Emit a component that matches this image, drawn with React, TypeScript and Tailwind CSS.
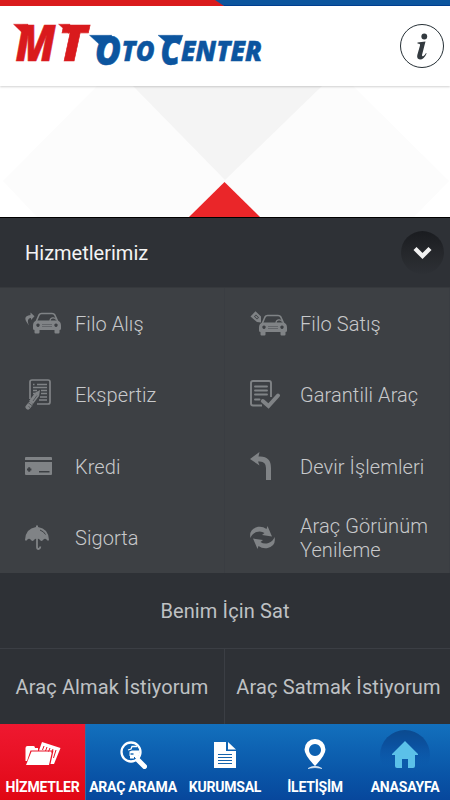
import React from "react";

interface Service {
  label: string;
  icon: React.ReactNode;
}

const Logo = () => (
  <svg width="270" height="56" viewBox="0 16 270 56" className="block overflow-visible">
    <g fill="#d91a1d" stroke="#d91a1d">
      <path d="M13.500 24.200H28V32H21.500Z" strokeWidth=".4" />
      <path d="M58.500 24.200H70L69 33.500Z" strokeWidth=".4" />
      <text y="60.500" fontFamily="Open Sans, sans-serif" fontWeight="800" fontStyle="italic" fontSize="50" strokeWidth="0.6">
        <tspan x="15.500" textLength="40" lengthAdjust="spacingAndGlyphs">M</tspan>
        <tspan x="58" textLength="29" lengthAdjust="spacingAndGlyphs">T</tspan>
      </text>
    </g>
    <g fill="#0c559f" stroke="#0c559f" fontFamily="Open Sans, sans-serif" fontWeight="800" fontStyle="italic">
      <path d="M89.500 35.300H112L99 44Z" strokeWidth=".4" />
      <path d="M158 35.300H183L180.500 41L168 44Z" strokeWidth=".4" />
      <text y="60.600" fontSize="28.500" strokeWidth="0.5">
        <tspan x="95" y="64.500" fontSize="40" textLength="26" lengthAdjust="spacingAndGlyphs">O</tspan>
        <tspan x="121.500" y="60.600" textLength="33" lengthAdjust="spacingAndGlyphs">TO</tspan>
        <tspan x="160.500" y="64.500" fontSize="40" textLength="20" lengthAdjust="spacingAndGlyphs">C</tspan>
        <tspan x="181" y="60.600" textLength="81" lengthAdjust="spacingAndGlyphs">ENTER</tspan>
      </text>
    </g>
  </svg>
);

// front view of a car, 29 x 21
const Car = () => (
  <>
    <path d="M3.500 9.500L6.500 2.500Q7.300 1 9 1H19.500Q21.500 1 22.300 2.500L25.500 9.500" fill="none" stroke="currentColor" strokeWidth="1.600" />
    <path d="M17.500 8.500a3.200 3.200 0 0 1 6-1.500" fill="none" stroke="currentColor" strokeWidth="1.200" />
    <path
      fillRule="evenodd"
      d="M4 8H25Q28.500 9 28.500 13V16Q28.500 17.500 27 17.500V20Q27 21 26 21H23Q22 21 22 20V17.500H7V20Q7 21 6 21H3Q2 21 2 20V17.500Q.5 17.500.5 16V13Q.5 9 4 8ZM5.500 11a1.700 1.700 0 1 0 .01 0ZM23.500 11a1.700 1.700 0 1 0 .01 0Z"
    />
    <path d="M9.500 12H19.500M9.500 14H19.500" stroke="#606366" strokeWidth=".9" />
  </>
);

const services: Service[] = [
  {
    label: "Filo Alış",
    icon: (
      <svg width="37" height="23" viewBox="0 0 37 23" fill="currentColor">
        <path d="M4 13.500Q-4 4 5.500 3V.5L9.500 4.300L6 8V6Q1 6.500 4 13.500Z" />
        <g transform="translate(7.500 .5)">
          <Car />
        </g>
      </svg>
    ),
  },
  {
    label: "Filo Satış",
    icon: (
      <svg width="38" height="25" viewBox="0 0 38 25" fill="currentColor">
        <path fillRule="evenodd" d="M.5 5.500L5.500 .3L11 5.500V11.500L7 11ZM4 5.500L7 8.500L9 6.500L6 3.500Z" />
        <path d="M5.500 5L7.500 7" stroke="currentColor" strokeWidth="1.300" />
        <g transform="translate(8.500 3.500)">
          <Car />
        </g>
      </svg>
    ),
  },
  {
    label: "Ekspertiz",
    icon: (
      <svg width="27" height="31" viewBox="0 0 27 31" fill="none" stroke="currentColor">
        <path d="M5 20V3Q5 1 7 1H23Q25 1 25 3V23Q25 25 23 25H12" strokeWidth="1.700" />
        <path d="M8 5.500H9.500M12 5.500H22M8 8.500H22M8 11.500H12M16 11.500H22M8 14.500H10M16 14.500H22M15 18H22M14 21H22" strokeWidth="1.300" />
        <path d="M3 28L5 25.500" strokeWidth="5" strokeLinecap="round" />
        <path d="M6 23.500L12 15.500" strokeWidth="5" />
        <path d="M9.500 14L15 11L14 17.500Z" fill="currentColor" stroke="none" />
        <path d="M3 23.500L7.500 27M8 22L12 16.500M3.500 27.500l1.500 1" stroke="#4d5053" strokeWidth=".9" />
      </svg>
    ),
  },
  {
    label: "Garantili Araç",
    icon: (
      <svg width="31" height="29" viewBox="0 0 31 29" fill="none" stroke="currentColor">
        <path d="M12 25.500H3Q1 25.500 1 23.500V3Q1 1 3 1H19Q21 1 21 3V17" strokeWidth="1.900" />
        <path d="M5 6.500H17M5 10.500H17M5 14.500H17M5 19.500H9.500" strokeWidth="1.900" strokeLinecap="round" />
        <path d="M12.800 21L18.500 26L28 15.500" strokeWidth="4" strokeLinecap="round" />
      </svg>
    ),
  },
  {
    label: "Kredi",
    icon: (
      <svg width="27" height="18" viewBox="0 0 27 18" fill="currentColor">
        <path fillRule="evenodd" d="M1 0H26Q27 0 27 1V3H0V1Q0 0 1 0ZM0 5H27V17Q27 18 26 18H1Q0 18 0 17ZM3.200 10.300V11.500H2V13.500H3.200V14.700H5.200V13.500H6.400V11.500H5.200V10.300ZM14 14V15.500H24.500V14Z" />
      </svg>
    ),
  },
  {
    label: "Devir İşlemleri",
    icon: (
      <svg width="22" height="28" viewBox="0 0 22 28" fill="currentColor">
        <path d="M0 7L9.500 0L8.500 4.500Q21 3.500 21 16V28H16V16Q16 8.500 8 9.500L9.500 13.500Z" />
      </svg>
    ),
  },
  {
    label: "Sigorta",
    icon: (
      <svg width="25" height="25" viewBox="0 0 25 25" fill="currentColor">
        <path d="M0 15Q.5 3.500 11 2V.7Q12 0 13 .7V2Q23.500 3.500 24 15Q23 16.500 22 15Q20 12.500 18 15Q16.500 17 15 15Q14 13.700 13 13.700H11Q10 13.700 9 15Q7.500 17 6 15Q4 12.500 2 15Q1 16.500 0 15Z" />
        <path d="M12 13V22Q12 24 13.500 24T15.300 21.500" fill="none" stroke="currentColor" strokeWidth="1.800" />
        <path d="M15 5Q19 6.500 20.500 9.500" fill="none" stroke="#3d4044" strokeWidth="1" />
      </svg>
    ),
  },
  {
    label: "Araç Görünüm Yenileme",
    icon: (
      <svg width="25" height="23" viewBox="0 0 25 23" fill="currentColor">
        <path d="M.5 12Q-1.500 3 8 .8Q12.500 0 16.500 3L17.500 0L22 10.500L12 9L14.500 7Q11 4.500 6.500 6Q2 7.500 .5 12Z" />
        <path d="M24.500 11Q26.500 20 17 22.200Q12.500 23 8.500 20L7.500 23L3 12.500L13 14L10.500 16Q14 18.500 18.500 17Q23 15.500 24.500 11Z" />
      </svg>
    ),
  },
];

const tabs: Service[] = [
  {
    label: "HİZMETLER",
    icon: (
      <svg width="36" height="25" viewBox="0 0 36 25" fill="white">
        <path d="M.5 19V6Q.5 4 2.500 4H8.500Q10 4 10 6H13V8.500H5.500L2 19Z" />
        <path d="M6.500 9.500H27L24 23H1Z" />
        <path d="M14 8.500L17 0L35.500 6L29 22H25.500L28.500 8.500Z" />
        <path d="M19 4L17.500 8M22 5L20.500 9M25 6L23.500 9.500M28 7L26.500 10.500M31 8L28.500 16" stroke="#e81326" strokeWidth="1" fill="none" />
      </svg>
    ),
  },
  {
    label: "ARAÇ ARAMA",
    icon: (
      <svg width="27" height="28" viewBox="0 0 27 28" fill="none" stroke="white">
        <circle cx="11" cy="11" r="9.500" strokeWidth="2.300" />
        <path d="M18 19L24.500 25.500" strokeWidth="5" strokeLinecap="round" />
        <path d="M8 9L11 8L12 5.500H17" strokeWidth="1.300" />
        <path d="M9.500 10.500L12 9.500H20L18 18L15 17V16H14V17.500H10V15H9.500Z" fill="white" stroke="none" />
        <path d="M10.500 13H13.500" stroke="#0d62b1" strokeWidth="1.400" />
      </svg>
    ),
  },
  {
    label: "KURUMSAL",
    icon: (
      <svg width="22" height="26" viewBox="0 0 22 26" fill="white">
        <path d="M0 0H12V9H22V26H0Z" />
        <path d="M14 0L22 7.500H14Z" />
        <path d="M4 12.500H18M4 15.500H18M4 18.500H18M4 21.500H18" stroke="#1563ac" strokeWidth="1.100" />
      </svg>
    ),
  },
  {
    label: "İLETİŞİM",
    icon: (
      <svg width="22" height="31" viewBox="0 0 22 31" fill="white">
        <path fillRule="evenodd" d="M11 0A10.500 10.500 0 0 1 21.500 10.500Q21.500 16 11 27Q.5 16 .5 10.500A10.500 10.500 0 0 1 11 0ZM11 5A6 6 0 1 0 11.010 5Z" />
        <path d="M4 29.500Q11 25 18 29.500Q11 27.500 4 29.500Z" stroke="white" strokeWidth=".5" />
      </svg>
    ),
  },
  {
    label: "ANASAYFA",
    icon: (
      <svg width="50" height="50" viewBox="0 0 50 50">
        <defs>
          <linearGradient id="well" x1="0" y1="0" x2="0" y2="1">
            <stop offset="0" stopColor="#0b4a8f" />
            <stop offset=".3" stopColor="#0b519f" />
            <stop offset=".7" stopColor="#0b51a5" stopOpacity="0" />
          </linearGradient>
        </defs>
        <circle cx="25" cy="25" r="25" fill="url(#well)" />
        <path d="M25 11L38 24V25H35V36Q35 38 33 38H28V29H22V38H17Q15 38 15 36V25H12V24Z" fill="#5bc1e9" />
      </svg>
    ),
  },
];

const App: React.FC = () => {
  return (
    <div className="flex h-[800px] w-[450px] flex-col overflow-hidden bg-[#2e3136] font-[Roboto,sans-serif]">
      {/* Header */}
      <header className="z-10 flex h-[86px] shrink-0 flex-col bg-white shadow-[0_1px_2px_rgba(0,0,0,0.18)]">
        <svg width="450" height="6" viewBox="0 0 450 6" className="block shrink-0">
          <path d="M0 0H450V6H0Z" fill="#0c559d" />
          <path d="M0 0H215L224 6H0Z" fill="#da1b1d" />
          <path d="M224 5.500H450" stroke="#003e8f" />
        </svg>
        <div className="flex items-start justify-between pt-[10px] pr-[6px]">
          <Logo />
          <button className="mt-[8px] flex size-[44px] items-center justify-center rounded-full border-[1.5px] border-[#263036]">
            <svg width="12" height="27" viewBox="0 0 12 27" fill="#333a3f">
              <circle cx="8.300" cy="3.500" r="2.900" />
              <path d="M1.500 9.500L9.500 8.500L6 22Q6 24 7.500 23Q9 22 10 20L10.600 20.500Q8 26.500 4 26.500Q.5 26 1.300 22L4 12.500Q4.500 10.500 1.500 10.500Z" />
            </svg>
          </button>
        </div>
      </header>

      {/* Banner */}
      <svg width="450" height="131" viewBox="0 86 450 131" className="block shrink-0 bg-white">
        <path d="M97 86H353L449 181L414 217H37L3 181Z" fill="#fcfcfc" />
        <path d="M133 86H322L225 180Z" fill="#f4f4f4" />
        <path d="M189 217L224.500 182L260 217Z" fill="#ea2629" />
      </svg>

      {/* Services title */}
      <div className="flex h-[70px] shrink-0 items-center justify-between border-t border-black pr-[6px] pl-[25px]">
        <h1 className="text-[20px] text-[#f4f4f4]">Hizmetlerimiz</h1>
        <button className="flex size-[43px] items-center justify-center rounded-full bg-linear-to-b from-[#1a1c20] via-[#25272b] to-[#2d3035]">
          <svg width="19" height="14" viewBox="0 0 19 14" fill="none" stroke="#f2f2f2" strokeWidth="4.300">
            <path d="M2 2.500L9.500 10L17 2.500" />
          </svg>
        </button>
      </div>

      {/* Services grid */}
      <ul className="grid h-[286px] shrink-0 grid-cols-2 grid-rows-4 border-t border-[#36393d] bg-[#3d4044]">
        {services.map((service) => (
          <li key={service.label} className="flex items-center border-r border-[#3a3d42] pl-[25px]">
            <span className="w-[50px] shrink-0 text-[#808386]">{service.icon}</span>
            <span className="pt-px text-[20px] leading-[24px] font-light tracking-[0.08px] text-[#c8c9cb]">{service.label}</span>
          </li>
        ))}
      </ul>

      {/* Actions */}
      <div className="flex h-[151px] shrink-0 flex-col text-[20px] tracking-[0.12px] text-[#bfc1c4]">
        <button className="h-[76px] w-full border-b border-[#3b3e44]">Benim İçin Sat</button>
        <div className="grid flex-1 grid-cols-2 whitespace-nowrap">
          <button className="border-r border-[#3b3e44]">Araç Almak İstiyorum</button>
          <button className="pl-[2px]">Araç Satmak İstiyorum</button>
        </div>
      </div>

      {/* Bottom tabs */}
      <nav className="grid h-[76px] shrink-0 grid-cols-[86px_94px_90px_90px_90px] bg-linear-to-b from-[#1370bd] to-[#07479c]">
        {tabs.map((tab, i) => (
          <button
            key={tab.label}
            className={`flex flex-col items-center ${
              i === 0 ? "border-r border-[#38669d] bg-linear-to-b from-[#ef1830] to-[#e10613]" : ""
            }`}
          >
            <span className="flex h-[54px] items-center justify-center pt-[7px]">{tab.icon}</span>
            <span className="text-[14px] leading-[18px] font-bold tracking-[-0.22px] whitespace-nowrap text-white">{tab.label}</span>
          </button>
        ))}
      </nav>
    </div>
  );
};

export default App;
